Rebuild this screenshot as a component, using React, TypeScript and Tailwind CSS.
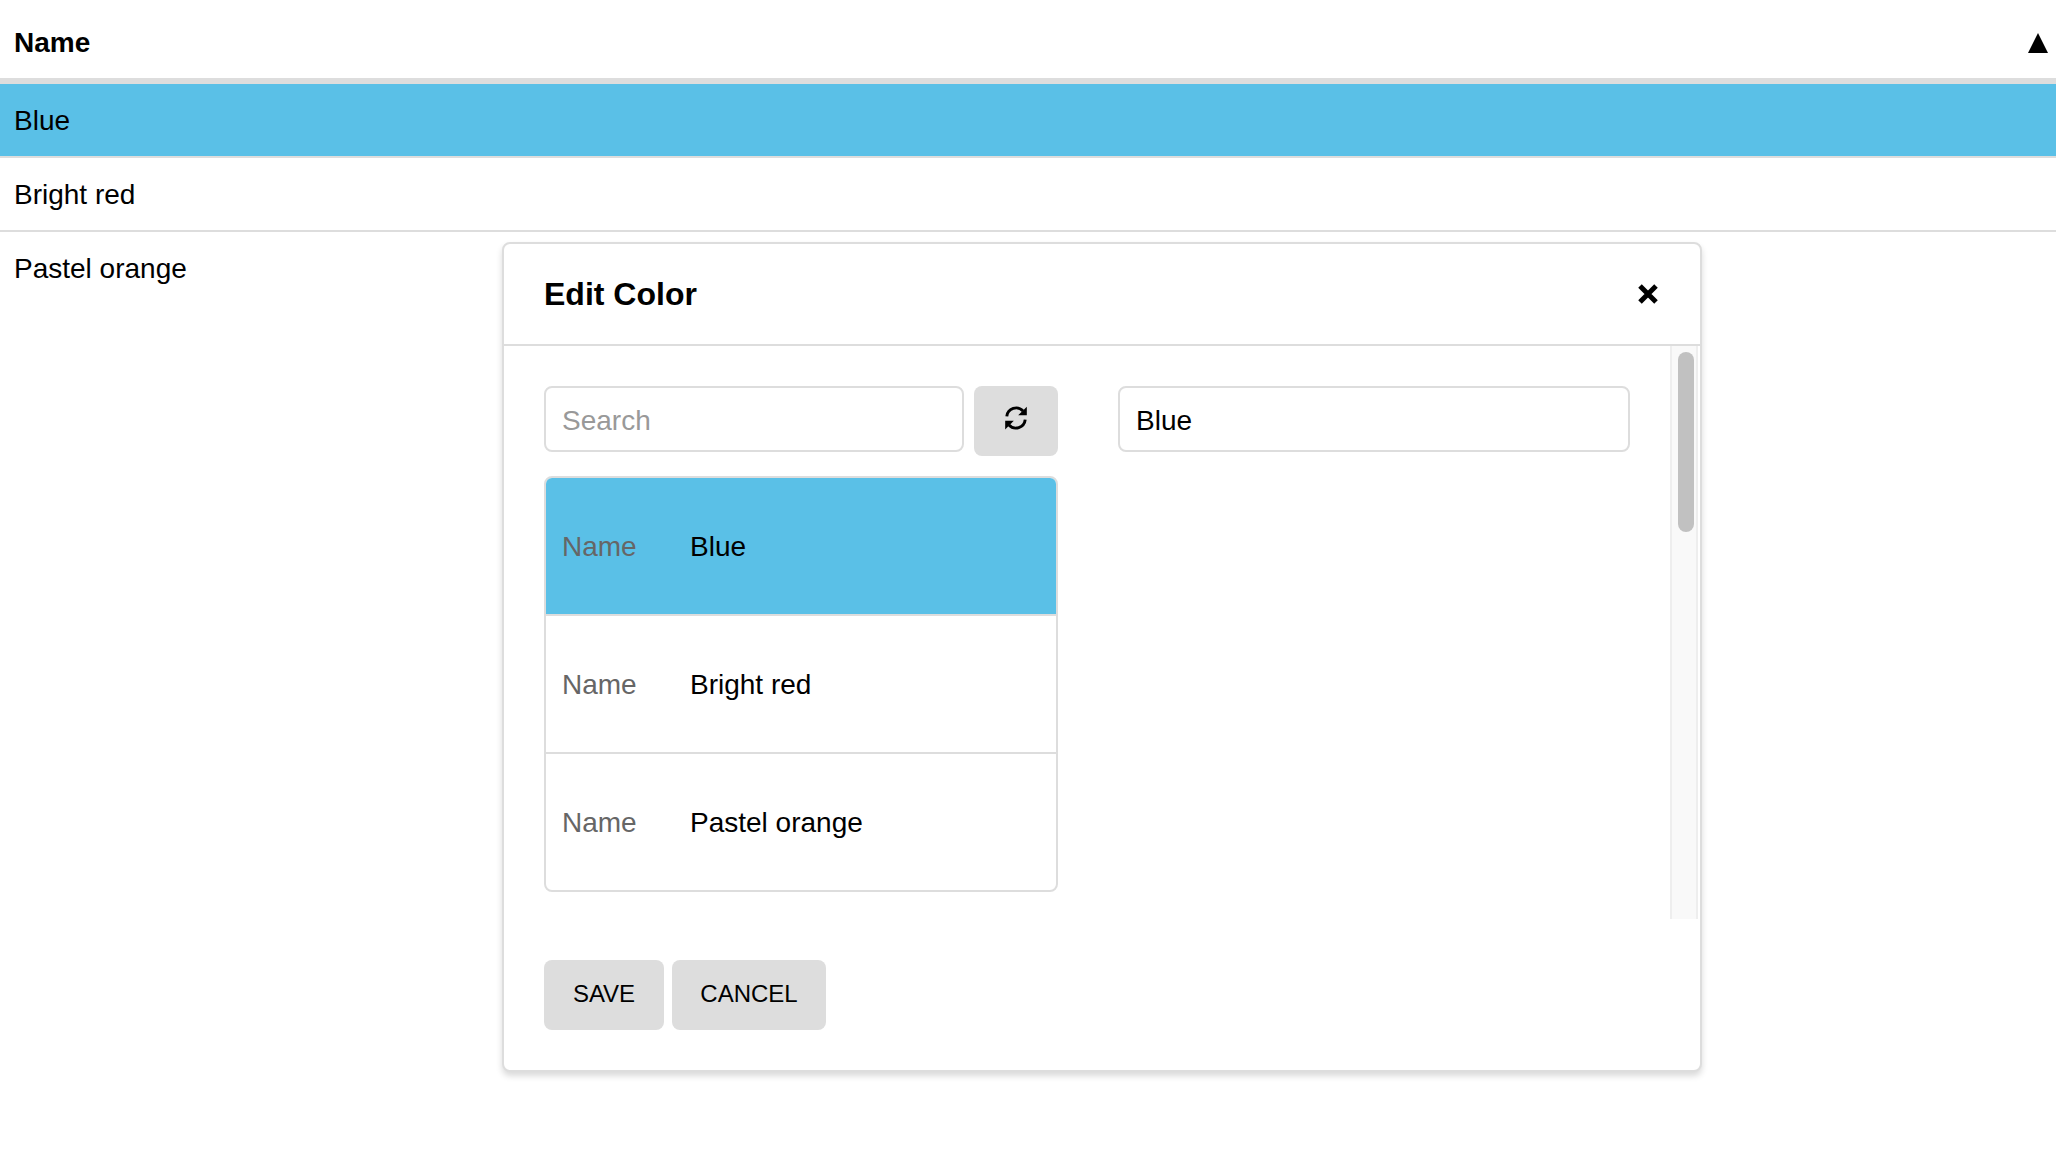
const font = { fontFamily: '"Liberation Sans", Arial, sans-serif' };
const colors = ['Blue', 'Bright red', 'Pastel orange'];

function RefreshIcon() {
  return (
    <svg width="26" height="26" viewBox="0 0 24 24" fill="none">
      <path d="M3.5 10.5A8.7 8.7 0 0 1 18.5 5.5" stroke="black" strokeWidth="2.7" />
      <path d="M20.5 13.5A8.7 8.7 0 0 1 5.5 18.5" stroke="black" strokeWidth="2.7" />
      <polygon points="22,1.5 22,9.5 14,9.5" fill="black" />
      <polygon points="2,22.5 2,14.5 10,14.5" fill="black" />
    </svg>
  );
}

function CloseIcon() {
  return (
    <svg width="20" height="20" viewBox="0 0 20 20" fill="none" className="mb-[1px]">
      <path d="M2 2L18 18M18 2L2 18" stroke="black" strokeWidth="5" />
    </svg>
  );
}

export default function App() {
  return (
    <div style={font} className="relative h-[1176px] w-full overflow-hidden bg-white text-[28px] text-black">
      <div className="flex h-[84px] items-center justify-between border-b-[6px] border-[#dddddd] pl-[14px] pr-[8px] pt-[7px] font-bold">
        <span>Name</span>
        <svg width="20" height="20" viewBox="0 0 20 20" className="mt-[1px]">
          <polygon points="10,0 20,20 0,20" fill="black" />
        </svg>
      </div>
      {colors.map((c, i) => (
        <div
          key={c}
          className={`flex h-[74px] items-center border-b-2 pl-[14px] pt-[2px] ${
            i === 0 ? 'bg-[#5ac0e7]' : ''
          } ${i === 2 ? 'border-transparent' : 'border-[#dddddd]'}`}
        >
          {c}
        </div>
      ))}

      <div className="absolute left-[502px] top-[242px] flex h-[830px] w-[1200px] flex-col rounded-lg border-2 border-[#dddddd] bg-white shadow-[0_4px_6px_rgba(0,0,0,0.15)]">
        <div className="flex h-[102px] items-center justify-between border-b-2 border-[#dddddd] pl-[40px] pr-[42px]">
          <span className="text-[32px] font-bold">Edit Color</span>
          <CloseIcon />
        </div>

        <div className="flex h-[573px]">
          <div className="flex flex-1 gap-[60px] pl-[40px] pt-[40px]">
            <div className="w-[514px]">
              <div className="flex items-start gap-[10px]">
                <div className="flex h-[66px] w-[420px] items-center rounded-lg border-2 border-[#dddddd] pl-[16px] pt-[3px] text-[#999999]">
                  Search
                </div>
                <button className="flex h-[70px] w-[84px] items-center justify-center rounded-lg bg-[#dddddd] pb-[6px]">
                  <RefreshIcon />
                </button>
              </div>
              <div className="mt-[20px] overflow-hidden rounded-lg border-2 border-[#dddddd]">
                {colors.map((c, i) => (
                  <div
                    key={c}
                    className={`flex items-center pl-[16px] pt-[2px] ${i === 0 ? 'bg-[#5ac0e7]' : ''} ${
                      i < 2 ? 'h-[138px] border-b-2 border-[#dddddd]' : 'h-[136px]'
                    }`}
                  >
                    <span className="w-[128px] text-[#666666]">Name</span>
                    <span>{c}</span>
                  </div>
                ))}
              </div>
            </div>
            <div className="flex h-[66px] w-[512px] items-center rounded-lg border-2 border-[#dddddd] pl-[16px] pt-[3px]">
              Blue
            </div>
          </div>
          <div className="relative mr-[2px] w-[28px] border-x-2 border-[#eeeeee] bg-[#f9f9f9]">
            <div className="absolute left-[6px] top-[6px] h-[180px] w-[16px] rounded-full bg-[#c1c1c1]" />
          </div>
        </div>

        <div className="flex gap-[8px] pl-[40px] pt-[41px] text-[24px]">
          <button className="flex h-[70px] w-[120px] items-center justify-center rounded-lg bg-[#dddddd] pb-[2px]">SAVE</button>
          <button className="flex h-[70px] w-[154px] items-center justify-center rounded-lg bg-[#dddddd] pb-[2px]">CANCEL</button>
        </div>
      </div>
    </div>
  );
}
